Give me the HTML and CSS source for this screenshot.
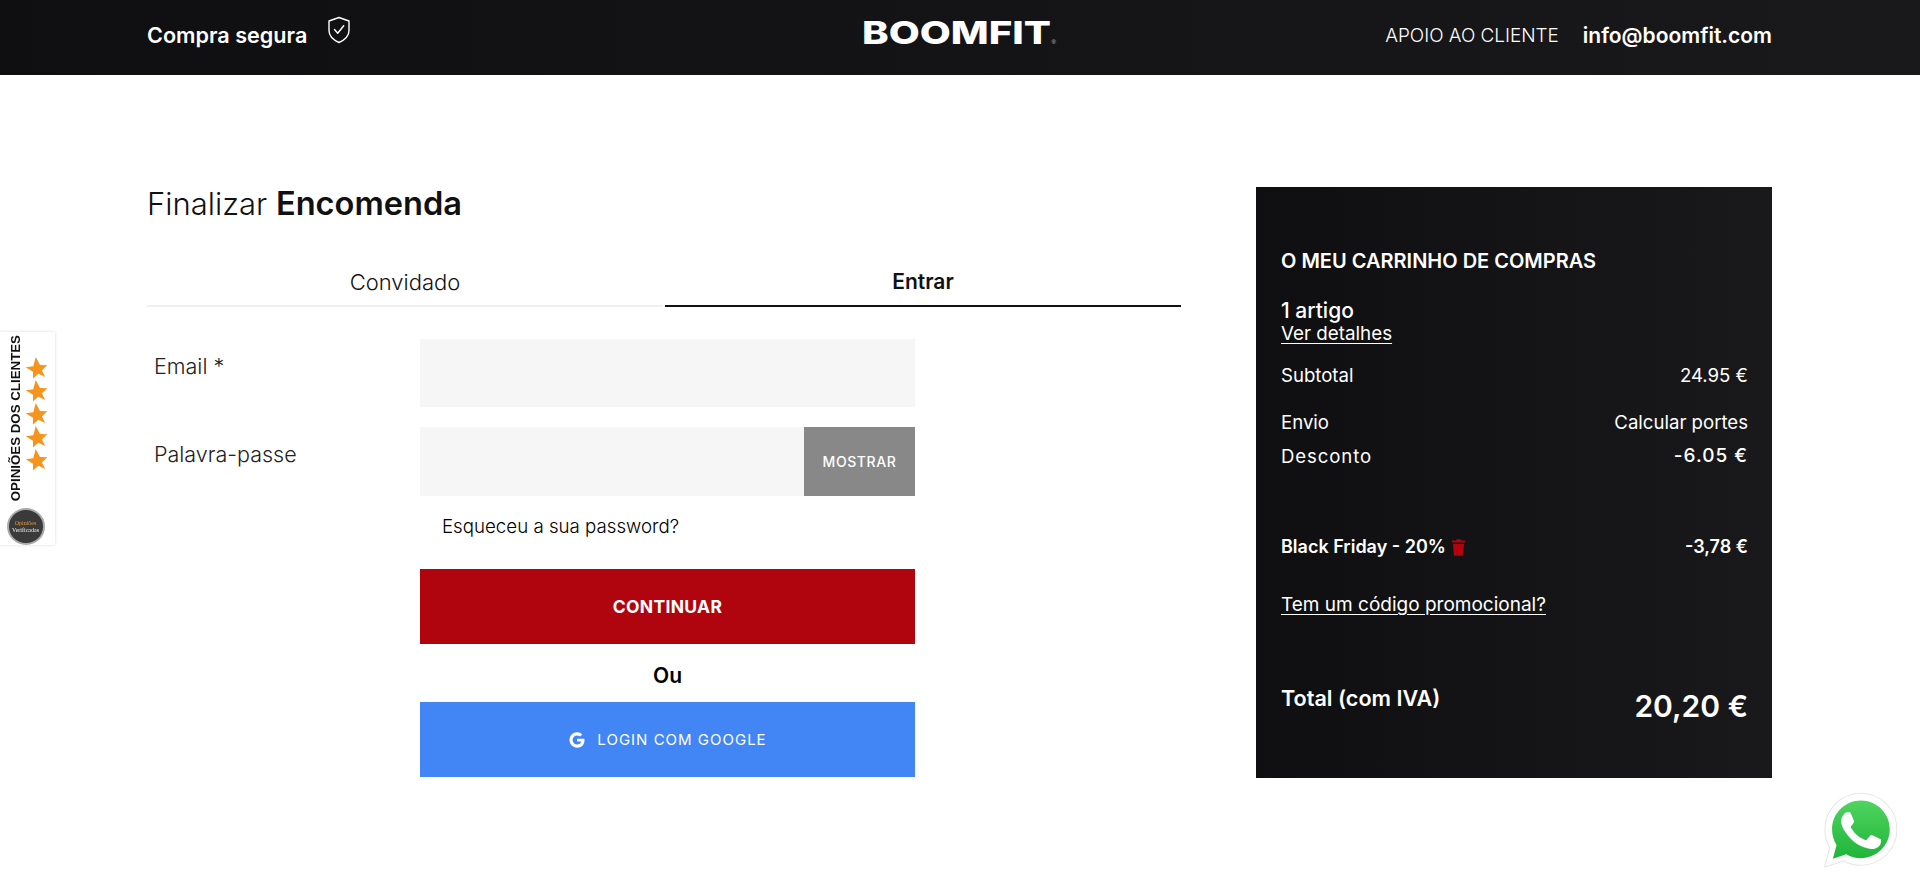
FILE: index.html
```html
<!DOCTYPE html>
<html lang="pt">
<head>
    <meta charset="UTF-8">
    <meta name="viewport" content="width=device-width, initial-scale=1.0">
    <title>Finalizar Encomenda - Boomfit</title>
    <link rel="stylesheet" href="styles.css">
</head>
<body>
    <header class="topbar">
        <div class="secure">
            <span>Compra segura</span>
            <svg class="shield" viewBox="0 0 24 28" fill="none" stroke="#fff" stroke-width="1.4" stroke-linejoin="round" stroke-linecap="round">
                <path d="M12 1.5 22 5v9.5c0 5.5-4.5 9.5-10 12-5.500-2.500-10-6.500-10-12V5z"/>
                <path d="m7.500 13.500 3.200 3.800 6-7.600"/>
            </svg>
        </div>
        <svg class="logo" viewBox="0 0 195 30" role="img" aria-label="BOOMFIT">
            <text x="0" y="24" textLength="189" lengthAdjust="spacingAndGlyphs" class="logo-word">BOOMFIT</text>
            <text x="189.500" y="24" class="logo-mark">®</text>
        </svg>
        <div class="support">
            <span class="support-label">APOIO AO CLIENTE</span>
            <a class="support-mail" href="#">info@boomfit.com</a>
        </div>
    </header>

    <main class="page">
        <section class="checkout">
            <h1>Finalizar <strong>Encomenda</strong></h1>

            <div class="tabs">
                <div class="tab">Convidado</div>
                <div class="tab tab-active">Entrar</div>
            </div>

            <form class="login">
                <label class="field-label">Email *</label>
                <div class="input"></div>

                <label class="field-label">Palavra-passe</label>
                <div class="input input-pass">
                    <button type="button" class="show-btn">MOSTRAR</button>
                </div>

                <div class="form-col">
                    <a class="forgot" href="#">Esqueceu a sua password?</a>
                    <button type="button" class="btn-continue">CONTINUAR</button>
                    <div class="or">Ou</div>
                    <button type="button" class="btn-google">
                        <svg viewBox="0 0 24 24" class="g-icon"><path fill="#fff" d="M12.200 10.200v3.900h5.500c-.5 2.500-2.600 4-5.500 4-3.400 0-6.100-2.700-6.100-6.100s2.700-6.100 6.100-6.100c1.500 0 2.800.5 3.900 1.500l2.900-2.900C17.100 2.800 14.800 1.800 12.200 1.800 6.500 1.800 2 6.400 2 12s4.500 10.200 10.200 10.200c5.900 0 9.800-4.100 9.800-10 0-.7-.1-1.400-.2-2z"/></svg>
                        <span>LOGIN COM GOOGLE</span>
                    </button>
                </div>
            </form>
        </section>

        <aside class="cart">
            <h2>O MEU CARRINHO DE COMPRAS</h2>
            <div class="cart-count">1 artigo</div>
            <a class="cart-link" href="#">Ver detalhes</a>

            <div class="cart-row row-subtotal"><span>Subtotal</span><span>24.95 €</span></div>
            <div class="cart-row row-shipping"><span>Envio</span><span>Calcular portes</span></div>
            <div class="cart-row row-discount"><span class="spaced">Desconto</span><span class="medium">-6.05 €</span></div>
            <div class="cart-row row-coupon">
                <span class="coupon">Black Friday - 20%
                    <svg class="trash" viewBox="0 0 14 18"><path fill="#b0050f" d="M5 0h4l.6 1.400H14v2.200H0V1.400h4.400zM1 5h12l-1 11.500c-.1.900-.7 1.500-1.500 1.500h-7c-.8 0-1.400-.6-1.500-1.500z"/></svg>
                </span>
                <span>-3,78 €</span>
            </div>
            <a class="cart-link promo" href="#">Tem um código promocional?</a>
            <div class="cart-total"><span class="total-label">Total (com IVA)</span><span class="total-value">20,20 €</span></div>
        </aside>
    </main>

    <div class="reviews">
        <div class="reviews-top">
            <span class="reviews-text">OPINIÕES DOS CLIENTES</span>
            <div class="stars">
                <svg viewBox="0 0 24 24"><use href="#star"/></svg>
                <svg viewBox="0 0 24 24"><use href="#star"/></svg>
                <svg viewBox="0 0 24 24"><use href="#star"/></svg>
                <svg viewBox="0 0 24 24"><use href="#star"/></svg>
                <svg viewBox="0 0 24 24"><use href="#star"/></svg>
            </div>
        </div>
        <div class="seal"><span>Opiniões</span><span class="seal-big">Verificadas</span></div>
    </div>

    <a class="whatsapp" href="#" aria-label="WhatsApp">
        <svg viewBox="0 0 72 74">
            <defs>
                <linearGradient id="wa" x1="0" y1="0" x2="0" y2="1">
                    <stop offset="0" stop-color="#4fd45f"/>
                    <stop offset="1" stop-color="#1fb53a"/>
                </linearGradient>
                <path id="star" fill="#f7941d" d="M1 9.500 9 10 13.500 1l2.600 9.200L23.500 12l-6.700 4.300L19 23.500l-6.500-4.800L6 22.500l1.500-7z"/>
            </defs>
            <path fill="#fff" stroke="#e6e6e6" stroke-width="1" d="M1.500 72.500 6.500 54C3.400 48.600 1.800 42.500 1.800 36.300 1.800 17.200 17.300 1.700 36.400 1.700S71 17.200 71 36.300 55.500 70.900 36.400 70.900c-5.800 0-11.500-1.500-16.600-4.200z"/>
            <path fill="url(#wa)" d="M9.500 64.500 13 51.500c-2.800-4.600-4.300-9.800-4.300-15.200C8.700 21 21.100 8.600 36.400 8.600S64.100 21 64.100 36.300 51.700 64 36.400 64c-5 0-9.800-1.300-14.100-3.800z"/>
            <path fill="#fff" d="M27.200 21.500c-.7-1.500-1.400-1.500-2.100-1.600h-1.800c-.6 0-1.600.2-2.500 1.200-.9.900-3.300 3.200-3.300 7.800s3.300 9.100 3.800 9.700c.5.600 6.500 10.400 16.100 14.200 8 3.100 9.600 2.500 11.300 2.400 1.700-.2 5.600-2.300 6.400-4.500.8-2.200.8-4.100.6-4.500-.2-.4-.9-.6-1.900-1.100s-5.700-2.800-6.500-3.100c-.9-.3-1.500-.5-2.200.5-.6.900-2.400 3.100-3 3.700-.5.600-1.100.7-2.100.2-1-.5-4.100-1.500-7.700-4.800-2.900-2.600-4.800-5.700-5.400-6.700-.6-1-.1-1.500.4-2 .4-.4 1-1.100 1.400-1.700.5-.6.600-1 1-1.600.3-.6.200-1.200-.1-1.700-.2-.4-2.100-5.100-3-7z"/>
        </svg>
    </a>
</body>
</html>
```
FILE: styles.css
```css
* {
    box-sizing: border-box;
}

html, body {
    margin: 0;
    padding: 0;
}

body {
    font-family: 'Inter', 'Liberation Sans', sans-serif;
    background: #fff;
    color: #111;
    height: 887px;
    overflow: hidden;
}

a {
    color: inherit;
}

/* top bar */
.topbar {
    height: 75px;
    padding: 0 148px 5px 147px;
    background: linear-gradient(90deg, #0f0f11 0%, #19191c 100%);
    color: #fff;
    display: grid;
    grid-template-columns: 1fr auto 1fr;
    align-items: center;
}

.secure {
    display: flex;
    align-items: center;
    gap: 20px;
    font-size: 21.6px;
    font-weight: 600;
}

.shield {
    width: 24px;
    height: 28px;
    margin-top: -10px;
}

.logo {
    width: 195px;
    height: 30px;
    overflow: visible;
}

.logo-word {
    font-family: 'Inter', sans-serif;
    font-weight: 800;
    font-size: 31.500px;
    fill: #fff;
}

.logo-mark {
    font-family: 'Liberation Sans', sans-serif;
    font-size: 6px;
    fill: #ccc;
}

.support {
    display: flex;
    justify-content: flex-end;
    align-items: center;
    gap: 24px;
    font-size: 21px;
}

.support-label {
    font-size: 18.900px;
    font-weight: 300;
}

.support-mail {
    font-weight: 600;
    text-decoration: none;
}

/* main layout */
.page {
    display: flex;
    justify-content: space-between;
    padding: 112px 148px 0 147px;
}

.checkout {
    width: 1034px;
}

h1 {
    margin: 0;
    height: 81px;
    line-height: 32px;
    font-size: 31px;
    font-weight: 300;
    color: #111;
}

h1 strong {
    font-size: 32.600px;
    font-weight: 600;
}

.tabs {
    display: flex;
    gap: 2px;
}

.tab {
    flex: 1;
    height: 39px;
    text-align: center;
    font-size: 22px;
    font-weight: 300;
    line-height: 28px;
    border-bottom: 2px solid #f0f0f0;
}

.tab-active {
    font-size: 21px;
    font-weight: 600;
    border-bottom-color: #111;
}

.login {
    display: grid;
    grid-template-columns: 273px 495px;
    margin-top: 32px;
    row-gap: 20px;
}

.field-label {
    padding: 14px 0 0 7px;
    font-size: 21.500px;
    font-weight: 300;
    color: #222;
}

.input {
    height: 68px;
    background: #f6f6f6;
    display: flex;
    justify-content: flex-end;
}

.input-pass {
    height: 69px;
}

.show-btn {
    width: 111px;
    border: 0;
    background: #888;
    color: #fff;
    font-family: inherit;
    font-size: 14px;
    font-weight: 500;
    letter-spacing: .6px;
}

.form-col {
    grid-column: 2;
    margin-top: -20px;
    display: flex;
    flex-direction: column;
}

.forgot {
    height: 73px;
    padding: 19px 0 0 22px;
    font-size: 18.700px;
    font-weight: 300;
    color: #000;
    text-decoration: none;
}

.btn-continue, .btn-google {
    border: 0;
    height: 75px;
    color: #fff;
    font-family: inherit;
}

.btn-continue {
    background: #b0050f;
    font-size: 17.500px;
    font-weight: 700;
    letter-spacing: .3px;
}

.or {
    height: 58px;
    line-height: 64px;
    text-align: center;
    font-size: 21px;
    font-weight: 600;
    color: #000;
}

.btn-google {
    background: #4285f4;
    font-size: 15px;
    font-weight: 400;
    letter-spacing: 1px;
    display: flex;
    align-items: center;
    justify-content: center;
    gap: 11px;
}

.g-icon {
    width: 18px;
    height: 18px;
}

/* cart */
.cart {
    width: 516px;
    height: 591px;
    padding: 61px 24px 0 25px;
    background: linear-gradient(90deg, #0f0f11 0%, #19191c 100%);
    color: #fff;
    font-size: 18.600px;
}

.cart h2 {
    margin: 0;
    font-size: 20px;
    line-height: 26px;
    font-weight: 600;
}

.cart-count {
    margin-top: 23px;
    font-size: 21px;
    line-height: 28px;
    font-weight: 500;
}

.cart-link {
    display: block;
    font-size: 18.800px;
    font-weight: 400;
    line-height: 22px;
    margin-top: -2px;
    text-underline-offset: 3px;
}

.cart-row {
    display: flex;
    justify-content: space-between;
    align-items: center;
    line-height: 24px;
    font-weight: 400;
}

.row-subtotal {
    margin-top: 18px;
}

.row-shipping {
    margin-top: 23px;
}

.row-discount {
    margin-top: 10px;
}

.spaced {
    letter-spacing: .9px;
}

.medium {
    font-size: 19px;
    font-weight: 500;
    letter-spacing: 1px;
}

.row-coupon {
    margin-top: 67px;
    font-size: 18px;
    font-weight: 600;
}

.coupon {
    display: flex;
    align-items: center;
    gap: 6px;
}

.trash {
    width: 13px;
    height: 17px;
}

.promo {
    margin-top: 35px;
    font-size: 19px;
}

.cart-total {
    display: flex;
    justify-content: space-between;
    margin-top: 67px;
}

.total-label {
    font-size: 21.600px;
    line-height: 30px;
    font-weight: 600;
}

.total-value {
    padding-top: 1px;
    font-size: 30px;
    line-height: 44px;
    font-weight: 600;
}

/* floating bits */
.reviews {
    position: fixed;
    left: 0;
    top: 332px;
    width: 55px;
    height: 213px;
    background: #fff;
    box-shadow: 0 0 3px rgba(0, 0, 0, .15);
    display: flex;
    flex-direction: column;
    align-items: center;
    padding: 3px 0 0 0;
}

.reviews-top {
    display: flex;
    gap: 2px;
    height: 167px;
}

.reviews-text {
    writing-mode: vertical-rl;
    transform: rotate(180deg);
    font-family: 'Liberation Sans', sans-serif;
    font-size: 13.300px;
    font-weight: 700;
    color: #111;
    white-space: nowrap;
}

.stars {
    display: flex;
    flex-direction: column;
    padding-top: 21px;
}

.stars svg {
    width: 23px;
    height: 23px;
    transform: rotate(-12deg);
}

.seal {
    width: 38px;
    height: 38px;
    margin: 7px 4px 0 0;
    border-radius: 50%;
    background: #3a3a3a;
    border: 2px solid #aaa;
    color: #e09a3a;
    font-family: 'Liberation Serif', serif;
    font-size: 6px;
    line-height: 7px;
    display: flex;
    flex-direction: column;
    align-items: center;
    justify-content: center;
    overflow: hidden;
}

.seal-big {
    color: #eee;
}

.whatsapp {
    position: fixed;
    left: 1823px;
    top: 791px;
    width: 75px;
    height: 78px;
}

.whatsapp svg {
    width: 100%;
    height: 100%;
    display: block;
}
```
